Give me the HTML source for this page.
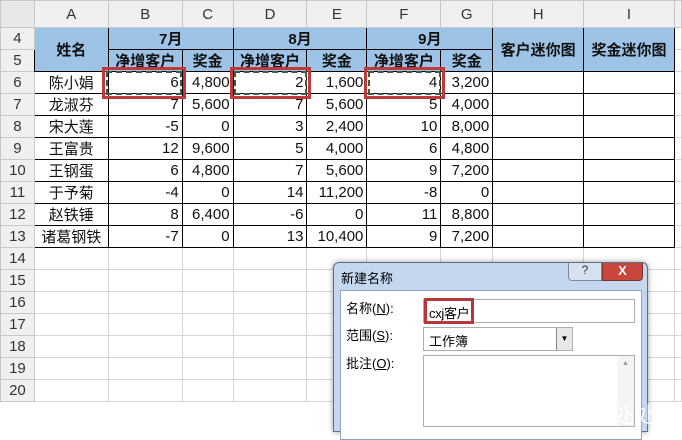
<!DOCTYPE html>
<html><head><meta charset="utf-8"><style>
*{margin:0;padding:0;box-sizing:border-box}
body{width:682px;height:428px;overflow:hidden;background:#fff;position:relative;font-family:"Liberation Sans","Noto Sans CJK SC",sans-serif}
table{position:absolute;left:0;top:0;border-collapse:collapse;table-layout:fixed}
td{height:22px;font-size:15px;border:1px solid #d4d4d4;padding:0 3px;white-space:nowrap;overflow:hidden;color:#111}
tr.ch td{height:27px;background:#f0f0f0;text-align:center;color:#333;border-color:#c8c8c8;font-size:15px}
td.rh{background:#f0f0f0;text-align:center;color:#333;border-color:#c8c8c8}
td.h{background:#9dc3e6;font-weight:bold;text-align:center;border:1px solid #000}
td.d{border:1px solid #000;text-align:right}
td.n{border:1px solid #000;text-align:center}
.sel{position:absolute;border:3px solid #c0393b;}
.sel div{position:absolute;left:1px;top:1px;right:1px;bottom:1px;border:2px dashed #3d5a45}
.dl{white-space:nowrap}
</style></head><body>
<table>
<colgroup><col style="width:34px"><col style="width:74px"><col style="width:74px"><col style="width:51px"><col style="width:74px"><col style="width:60px"><col style="width:74px"><col style="width:52px"><col style="width:91px"><col style="width:91px"><col style="width:7px"></colgroup>
<tr class="ch"><td style="background:#e8e8e8"></td><td>A</td><td>B</td><td>C</td><td>D</td><td>E</td><td>F</td><td>G</td><td>H</td><td>I</td><td></td></tr>
<tr><td class="rh">4</td><td class="h" rowspan="2">姓名</td><td class="h" colspan="2">7月</td><td class="h" colspan="2">8月</td><td class="h" colspan="2">9月</td><td class="h" rowspan="2">客户迷你图</td><td class="h" rowspan="2">奖金迷你图</td><td></td></tr>
<tr><td class="rh">5</td><td class="h">净增客户</td><td class="h">奖金</td><td class="h">净增客户</td><td class="h">奖金</td><td class="h">净增客户</td><td class="h">奖金</td><td></td></tr>
<tr><td class="rh">6</td><td class="n">陈小娟</td><td class="d">6</td><td class="d">4,800</td><td class="d">2</td><td class="d">1,600</td><td class="d">4</td><td class="d">3,200</td><td class="d"></td><td class="d"></td><td></td></tr>
<tr><td class="rh">7</td><td class="n">龙淑芬</td><td class="d">7</td><td class="d">5,600</td><td class="d">7</td><td class="d">5,600</td><td class="d">5</td><td class="d">4,000</td><td class="d"></td><td class="d"></td><td></td></tr>
<tr><td class="rh">8</td><td class="n">宋大莲</td><td class="d">-5</td><td class="d">0</td><td class="d">3</td><td class="d">2,400</td><td class="d">10</td><td class="d">8,000</td><td class="d"></td><td class="d"></td><td></td></tr>
<tr><td class="rh">9</td><td class="n">王富贵</td><td class="d">12</td><td class="d">9,600</td><td class="d">5</td><td class="d">4,000</td><td class="d">6</td><td class="d">4,800</td><td class="d"></td><td class="d"></td><td></td></tr>
<tr><td class="rh">10</td><td class="n">王钢蛋</td><td class="d">6</td><td class="d">4,800</td><td class="d">7</td><td class="d">5,600</td><td class="d">9</td><td class="d">7,200</td><td class="d"></td><td class="d"></td><td></td></tr>
<tr><td class="rh">11</td><td class="n">于予菊</td><td class="d">-4</td><td class="d">0</td><td class="d">14</td><td class="d">11,200</td><td class="d">-8</td><td class="d">0</td><td class="d"></td><td class="d"></td><td></td></tr>
<tr><td class="rh">12</td><td class="n">赵铁锤</td><td class="d">8</td><td class="d">6,400</td><td class="d">-6</td><td class="d">0</td><td class="d">11</td><td class="d">8,800</td><td class="d"></td><td class="d"></td><td></td></tr>
<tr><td class="rh">13</td><td class="n">诸葛钢铁</td><td class="d">-7</td><td class="d">0</td><td class="d">13</td><td class="d">10,400</td><td class="d">9</td><td class="d">7,200</td><td class="d"></td><td class="d"></td><td></td></tr>
<tr><td class="rh">14</td><td></td><td></td><td></td><td></td><td></td><td></td><td></td><td></td><td></td><td></td></tr>
<tr><td class="rh">15</td><td></td><td></td><td></td><td></td><td></td><td></td><td></td><td></td><td></td><td></td></tr>
<tr><td class="rh">16</td><td></td><td></td><td></td><td></td><td></td><td></td><td></td><td></td><td></td><td></td></tr>
<tr><td class="rh">17</td><td></td><td></td><td></td><td></td><td></td><td></td><td></td><td></td><td></td><td></td></tr>
<tr><td class="rh">18</td><td></td><td></td><td></td><td></td><td></td><td></td><td></td><td></td><td></td><td></td></tr>
<tr><td class="rh">19</td><td></td><td></td><td></td><td></td><td></td><td></td><td></td><td></td><td></td><td></td></tr>
<tr><td class="rh">20</td><td></td><td></td><td></td><td></td><td></td><td></td><td></td><td></td><td></td><td></td></tr>
</table>
<div class="sel" style="left:102px;top:67px;width:84px;height:32px"><div></div></div>
<div class="sel" style="left:230px;top:67px;width:81px;height:32px"><div></div></div>
<div class="sel" style="left:364px;top:67px;width:81px;height:32px"><div></div></div>

<div style="position:absolute;left:333px;top:262px;width:315px;height:170px;background:#c4d7ee;border:1px solid #5a6f8a;border-radius:6px 6px 0 0;box-shadow:0 0 6px rgba(0,0,0,.4)">
 <div class="dl" style="position:absolute;left:7px;top:5px;font-size:13px;color:#000">新建名称</div>
 <div style="position:absolute;left:234px;top:0;width:34px;height:18px;background:#d6e2f0;border:1px solid #7a8aa0;border-top:none;border-radius:0 0 0 4px;font-size:12px;text-align:center;color:#333">?</div>
 <div style="position:absolute;left:268px;top:0;width:41px;height:18px;background:#c9463d;border:1px solid #7a3530;border-top:none;border-radius:0 0 4px 0;font-size:13px;font-weight:bold;text-align:center;color:#fff">X</div>
 <div style="position:absolute;left:6px;top:27px;width:302px;height:150px;background:#fff;border:1px solid #8fa5c0">
  <div class="dl" style="position:absolute;left:5px;top:7px;font-size:13px">名称(<u>N</u>):</div>
  <div class="dl" style="position:absolute;left:5px;top:34px;font-size:13px">范围(<u>S</u>):</div>
  <div class="dl" style="position:absolute;left:5px;top:62px;font-size:13px">批注(<u>O</u>):</div>
  <div style="position:absolute;left:82px;top:8px;width:212px;height:24px;border:1px solid #abadb3"></div>
  <div class="dl" style="position:absolute;left:83px;top:7px;width:50px;height:26px;border:3px solid #b8373a;font-size:13px;padding:2px 0 0 2px;letter-spacing:-0.3px">cxj客户</div>
  <div class="dl" style="position:absolute;left:82px;top:36px;width:150px;height:24px;border:1px solid #abadb3;font-size:13px;padding:3px 0 0 5px">工作簿</div>
  <div style="position:absolute;left:215px;top:37px;width:16px;height:22px;background:#e8e8e8;border-left:1px solid #888;font-size:8px;text-align:center;line-height:22px">▼</div>
  <div style="position:absolute;left:82px;top:64px;width:212px;height:72px;border:1px solid #abadb3"></div>
  <div style="position:absolute;left:276px;top:65px;width:17px;height:70px;background:#f4f4f4;font-size:7px;color:#999;text-align:center;padding-top:4px">▲</div>
 </div>
</div>
<div class="dl" style="position:absolute;left:612px;top:398px;font-size:22px;color:rgba(255,255,255,.85)">处处锐</div>
</body></html>
